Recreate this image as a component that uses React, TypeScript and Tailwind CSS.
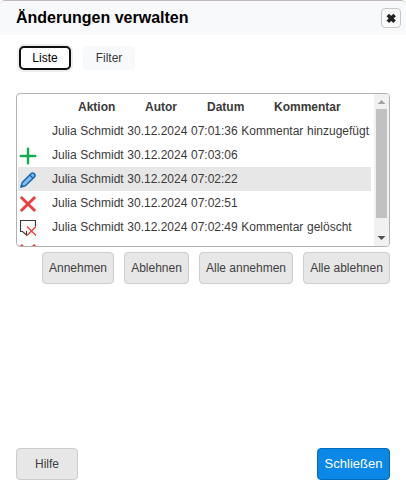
import React from "react";

type Kind = "none" | "insert" | "attribute" | "delete" | "comment";

const rows: { kind: Kind; text: string; selected?: boolean }[] = [
  { kind: "none", text: "Julia Schmidt 30.12.2024 07:01:36 Kommentar hinzugefügt" },
  { kind: "insert", text: "Julia Schmidt 30.12.2024 07:03:06" },
  { kind: "attribute", text: "Julia Schmidt 30.12.2024 07:02:22", selected: true },
  { kind: "delete", text: "Julia Schmidt 30.12.2024 07:02:51" },
  { kind: "comment", text: "Julia Schmidt 30.12.2024 07:02:49 Kommentar gelöscht" },
  { kind: "delete", text: "" },
];

function ChangeIcon({ kind }: { kind: Kind }) {
  return (
    <svg className="mt-1 h-5 w-5 shrink-0" viewBox="0 0 20 20" fill="none">
      {kind === "insert" && <path d="M10 1.8v14.4M2.8 9h14.4" stroke="#18ab50" strokeWidth="2.5" strokeLinecap="round" />}
      {kind === "attribute" && (
        <>
          <path d="M2.9 16.1 4.2 11.6 13 2.8Q14.6 1.2 16.3 2.8 17.9 4.5 16.4 6L7.4 14.8Z" fill="#83beec" stroke="#1668ad" strokeWidth="1.5" strokeLinejoin="round" />
          <path d="m11.8 4 3.2 3.2" stroke="#1668ad" strokeWidth="1.4" />
          <path d="m2.4 16.6 1.1-3.6 2.5 2.5Z" fill="#1668ad" />
        </>
      )}
      {kind === "delete" && <path d="m2.9 1.9 14.2 14.2M17.1 1.9 2.9 16.1" stroke="#ed3d3b" strokeWidth="2.8" />}
      {kind === "comment" && (
        <>
          <path d="M8.5 12v4L4.5 12.5h-2v-11h15v6" fill="#fafafa" stroke="#3a3a38" strokeWidth="1.1" />
          <path d="m9 7.5 9 9M18 7.5l-9 9" stroke="#ed3d3b" strokeWidth="1.3" />
        </>
      )}
    </svg>
  );
}

function Button({ className, children }: { className: string; children: React.ReactNode }) {
  return (
    <button className={`h-8 shrink-0 whitespace-nowrap rounded border border-[#cccccc] bg-[#e7e7e7] text-center text-xs text-[#3f3f3f] ${className}`}>
      {children}
    </button>
  );
}

export default function App() {
  return (
    <div className="h-[485px] w-[406px] bg-white font-['Liberation_Sans',Arial,sans-serif] text-xs text-[#3a3a3a]">
      <div className="flex h-full flex-col overflow-hidden rounded-t-[5px] border-t border-[#c0bbb8]">
        <header className="flex h-[34px] shrink-0 items-center justify-between bg-[#f8f9fb] pl-4 pr-[5px]">
          <h1 className="text-base font-bold leading-5 text-black">Änderungen verwalten</h1>
          <button aria-label="Schließen" className="flex h-5 w-5 items-center justify-center rounded border border-[#c8c8c8] bg-[#fbfbfb]">
            <svg className="h-3 w-3 shrink-0" viewBox="0 0 12 12">
              <path d="m2.8 3 6.8 6.8M9.6 3 2.8 9.8" stroke="#222" strokeWidth="3.6" />
            </svg>
          </button>
        </header>

        <nav className="mt-[11px] flex h-6 shrink-0 gap-3 pl-[19px]">
          <button className="h-6 w-[52px] rounded-[5px] border-2 border-[#101010] bg-white text-xs text-black shadow-[0_0_0_2px_#eeeeee]">Liste</button>
          <button className="h-6 w-[52px] rounded bg-[#f8f9fb] text-xs">Filter</button>
        </nav>

        <section className="mx-4 mt-[23px] flex h-[154px] shrink-0 overflow-hidden rounded border border-[#b2b2b2]">
          <div className="min-w-0 flex-1 overflow-hidden pl-px pr-[3px] pt-px">
            <div className="flex h-6 items-center pl-[60px] font-bold">
              <span className="w-[67px]">Aktion</span>
              <span className="w-[62px]">Autor</span>
              <span className="w-[67px]">Datum</span>
              <span>Kommentar</span>
            </div>
            {rows.map((row, i) => (
              <div key={i} className={`flex h-6 ${row.selected ? "bg-[#e7e7e7]" : ""}`}>
                <ChangeIcon kind={row.kind} />
                <span className="whitespace-pre pl-[14px] leading-6 [word-spacing:0.3px]">{row.text}</span>
              </div>
            ))}
          </div>
          <div className="flex w-[15px] shrink-0 flex-col items-center bg-[#f1f1f1]">
            <svg className="h-[15px] w-[15px] shrink-0" viewBox="0 0 15 15"><path d="m3.5 10 4-4 4 4Z" fill="#a3a3a3" /></svg>
            <div className="h-[109px] w-[11px] bg-[#c1c1c1]" />
            <svg className="mt-auto h-[15px] w-[15px] shrink-0" viewBox="0 0 15 15"><path d="m3.5 5 4 4 4-4Z" fill="#505050" /></svg>
          </div>
        </section>

        <div className="mt-[5px] flex shrink-0 justify-end gap-[10px] pr-4">
          <Button className="w-[72px]">Annehmen</Button>
          <Button className="w-[65px]">Ablehnen</Button>
          <Button className="w-[94px]">Alle annehmen</Button>
          <Button className="w-[87px]">Alle ablehnen</Button>
        </div>

        <footer className="mb-[5px] mt-auto flex justify-between px-4">
          <Button className="w-[62px]">Hilfe</Button>
          <button className="h-8 w-[73px] rounded border border-[#0369b9] bg-[#0b87e7] text-[13px] text-white">Schließen</button>
        </footer>
      </div>
    </div>
  );
}
